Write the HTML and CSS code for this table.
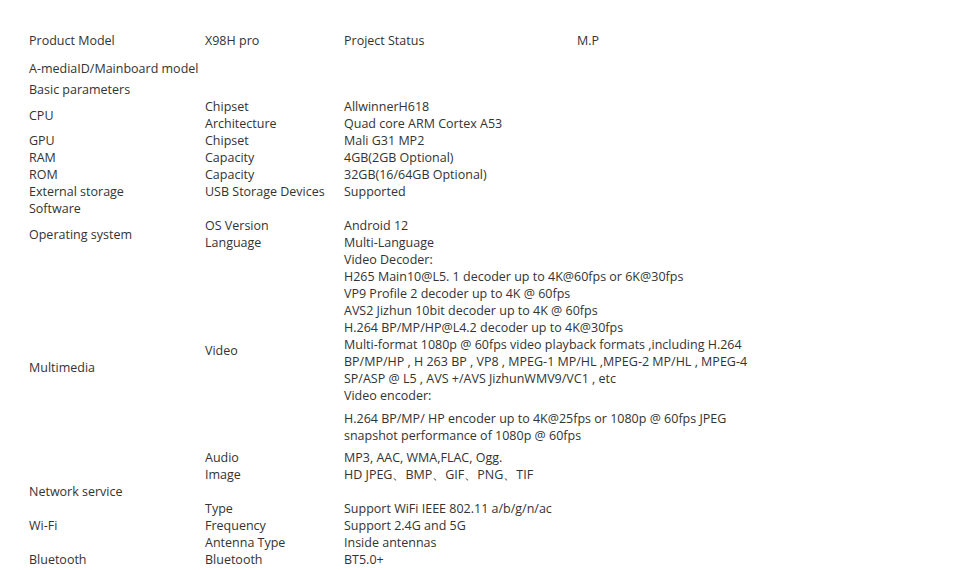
FILE: index.html
```html
<!DOCTYPE html>
<html lang="en">
<head>
  <meta charset="UTF-8" />
  <title>X98H pro Specification</title>
  <link rel="stylesheet" href="styles.css">
</head>
<body>
  <table class="spec-table">
    <colgroup>
      <col class="col-group">
      <col class="col-item">
      <col class="col-value">
      <col class="col-extra">
    </colgroup>
    <tr class="row-head">
      <td>Product Model</td>
      <td>X98H pro</td>
      <td>Project Status</td>
      <td>M.P</td>
    </tr>
    <tr class="row-board">
      <td colspan="4">A-mediaID/Mainboard model</td>
    </tr>
    <tr>
      <td colspan="4">Basic parameters</td>
    </tr>
    <tr>
      <td rowspan="2">CPU</td>
      <td>Chipset</td>
      <td colspan="2">AllwinnerH618</td>
    </tr>
    <tr>
      <td>Architecture</td>
      <td colspan="2">Quad core ARM Cortex A53</td>
    </tr>
    <tr>
      <td>GPU</td>
      <td>Chipset</td>
      <td colspan="2">Mali G31 MP2</td>
    </tr>
    <tr>
      <td>RAM</td>
      <td>Capacity</td>
      <td colspan="2">4GB(2GB Optional)</td>
    </tr>
    <tr>
      <td>ROM</td>
      <td>Capacity</td>
      <td colspan="2">32GB(16/64GB Optional)</td>
    </tr>
    <tr>
      <td>External storage</td>
      <td>USB Storage Devices</td>
      <td colspan="2">Supported</td>
    </tr>
    <tr>
      <td colspan="4">Software</td>
    </tr>
    <tr>
      <td rowspan="2">Operating system</td>
      <td>OS Version</td>
      <td colspan="2">Android 12</td>
    </tr>
    <tr>
      <td>Language</td>
      <td colspan="2">Multi-Language</td>
    </tr>
    <tr>
      <td rowspan="3">Multimedia</td>
      <td>Video</td>
      <td colspan="2" class="video-cell">
        <div class="video-decoder">
          Video Decoder:<br>
          H265 Main10@L5. 1 decoder up to 4K@60fps or 6K@30fps<br>
          VP9 Profile 2 decoder up to 4K @ 60fps<br>
          AVS2 Jizhun 10bit decoder up to 4K @ 60fps<br>
          H.264 BP/MP/HP@L4.2 decoder up to 4K@30fps<br>
          Multi-format 1080p @ 60fps video playback formats ,including H.264 BP/MP/HP , H 263 BP , VP8 , MPEG-1 MP/HL ,MPEG-2 MP/HL , MPEG-4 SP/ASP @ L5 , AVS +/AVS JizhunWMV9/VC1 , etc<br>
          Video encoder:
        </div>
        <p class="video-encoder">H.264 BP/MP/ HP encoder up to 4K@25fps or 1080p @ 60fps JPEG snapshot performance of 1080p @ 60fps</p>
      </td>
    </tr>
    <tr>
      <td>Audio</td>
      <td colspan="2">MP3, AAC, WMA,FLAC, Ogg.</td>
    </tr>
    <tr>
      <td>Image</td>
      <td colspan="2">HD JPEG、BMP、GIF、PNG、TIF</td>
    </tr>
    <tr>
      <td colspan="4">Network service</td>
    </tr>
    <tr>
      <td rowspan="3">Wi-Fi</td>
      <td>Type</td>
      <td colspan="2">Support WiFi IEEE 802.11 a/b/g/n/ac</td>
    </tr>
    <tr>
      <td>Frequency</td>
      <td colspan="2">Support 2.4G and 5G</td>
    </tr>
    <tr>
      <td>Antenna Type</td>
      <td colspan="2">Inside antennas</td>
    </tr>
    <tr>
      <td>Bluetooth</td>
      <td>Bluetooth</td>
      <td colspan="2">BT5.0+</td>
    </tr>
  </table>
</body>
</html>
```

FILE: styles.css
```css
html, body {
  margin: 0;
  padding: 0;
  background: #fff;
  font-family: 'Open Sans', Arial, sans-serif;
  font-size: 12.5px;
  color: #333;
}
.spec-table {
  border-collapse: collapse;
  table-layout: fixed;
  width: 736px;
  margin: 25px 0 0 29px;
}
.col-group { width: 176px; }
.col-item { width: 139px; }
.col-value { width: 233px; }
.spec-table td {
  padding: 0;
  line-height: 17px;
  vertical-align: middle;
  white-space: nowrap;
}
.spec-table td.video-cell {
  white-space: normal;
}
.row-head td {
  height: 31px;
}
.row-board td {
  height: 25px;
}
.video-encoder {
  margin: 6px 0 5px 0;
}
```
